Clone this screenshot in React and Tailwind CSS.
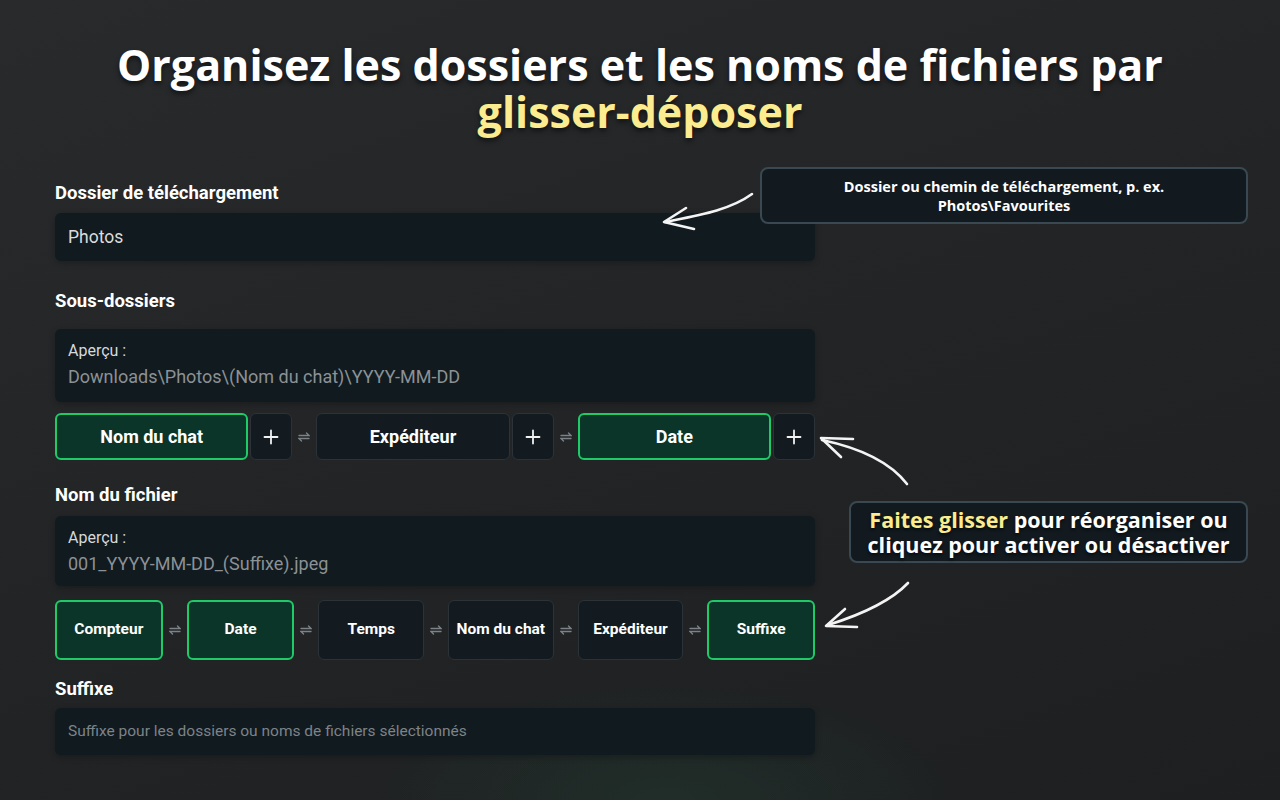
import React from "react";

const ui = { fontFamily: "Roboto, 'Noto Sans', sans-serif" };
const head = { fontFamily: "'Open Sans', 'Noto Sans', sans-serif" };

function Swap() {
  return (
    <div className="flex w-[24px] shrink-0 items-center justify-center">
      <svg width="12" height="14" viewBox="0 0 12 14" fill="none" stroke="#7c8287" strokeWidth="1.3" strokeLinecap="round">
        <path d="M1 5.5H11L8.5 3" />
        <path d="M11 8.5H1L3.5 11" />
      </svg>
    </div>
  );
}

function PlusBtn() {
  return (
    <div className="flex w-[42px] shrink-0 items-center justify-center rounded-md border border-[#2b3339] bg-[#131b20]">
      <svg width="16" height="16" viewBox="0 0 16 16" stroke="#f1f1f1" strokeWidth="1.8" strokeLinecap="round">
        <path d="M8 1.5V14.5M1.5 8H14.5" />
      </svg>
    </div>
  );
}

function Chip({ label, active, small }) {
  return (
    <div
      className={
        "flex flex-1 items-center justify-center whitespace-nowrap rounded-md font-bold text-white " +
        (small ? "text-[15.5px] " : "text-[18px] ") +
        (active
          ? "border-2 border-[#1fcb68] bg-[#0c3529]"
          : "border border-[#2b3339] bg-[#131b20]")
      }
    >
      {label}
    </div>
  );
}

function Label({ children, className = "" }) {
  return (
    <div className={"text-[18.5px] font-bold leading-[24px] text-white " + className}>{children}</div>
  );
}

function Preview({ path, className = "" }) {
  return (
    <div className={"rounded-md bg-[#111a1f] px-[13px] pt-[12px] shadow-[0_2px_6px_rgba(0,0,0,0.25)] " + className}>
      <div className="text-[16px] leading-[20px] text-[#d6d8da]">Aperçu :</div>
      <div className="mt-[4px] text-[18px] leading-[24px] text-[#8b9195]">{path}</div>
    </div>
  );
}

export default function App() {
  return (
    <div
      className="relative h-[800px] w-[1280px] overflow-hidden bg-[radial-gradient(ellipse_300px_120px_at_52%_100%,rgba(34,70,52,0.35),transparent),linear-gradient(160deg,#282a2c_0%,#222426_50%,#1d1f21_100%)]"
      style={ui}
    >
      <div
        className="pt-[41px] text-center text-[43px] font-bold leading-[47px] text-white [text-shadow:0_3px_5px_rgba(0,0,0,0.55)]"
        style={head}
      >
        <div>Organisez les dossiers et les noms de fichiers par</div>
        <div className="text-[#fbec8f]">glisser-déposer</div>
      </div>

      <div className="ml-[55px] mt-[46px] w-[760px]">
        <Label>Dossier de téléchargement</Label>
        <div className="mt-[8px] flex h-[48px] items-center rounded-md bg-[#111a1f] px-[13px] text-[17.5px] text-[#dcdcdc] shadow-[0_2px_6px_rgba(0,0,0,0.25)]">
          Photos
        </div>

        <Label className="mt-[28px]">Sous-dossiers</Label>
        <Preview className="mt-[16px] pb-[13px]" path="Downloads\Photos\(Nom du chat)\YYYY-MM-DD" />

        <div className="mt-[11px] flex h-[47px]">
          <div className="flex flex-1 gap-[2px]">
            <Chip label="Nom du chat" active />
            <PlusBtn />
          </div>
          <Swap />
          <div className="flex flex-1 gap-[2px]">
            <Chip label="Expéditeur" />
            <PlusBtn />
          </div>
          <Swap />
          <div className="flex flex-1 gap-[2px]">
            <Chip label="Date" active />
            <PlusBtn />
          </div>
        </div>

        <Label className="mt-[23px]">Nom du fichier</Label>
        <Preview className="mt-[9px] pb-[10px]" path="001_YYYY-MM-DD_(Suffixe).jpeg" />

        <div className="mt-[14px] flex h-[60px]">
          <Chip small label="Compteur" active />
          <Swap />
          <Chip small label="Date" active />
          <Swap />
          <Chip small label="Temps" />
          <Swap />
          <Chip small label="Nom du chat" />
          <Swap />
          <Chip small label="Expéditeur" />
          <Swap />
          <Chip small label="Suffixe" active />
        </div>

        <Label className="mt-[17px]">Suffixe</Label>
        <div className="mt-[7px] flex h-[47px] items-center rounded-md bg-[#111a1f] px-[13px] text-[15.5px] text-[#7d8388] shadow-[0_2px_6px_rgba(0,0,0,0.25)]">
          Suffixe pour les dossiers ou noms de fichiers sélectionnés
        </div>
      </div>

      {/* Callout 1 */}
      <div
        className="absolute left-[760px] top-[167px] flex h-[57px] w-[488px] flex-col items-center justify-center rounded-lg border-2 border-[#3a4852] bg-[#121a1f] text-center text-[14.5px] font-bold leading-[19px] text-white"
        style={head}
      >
        <div>Dossier ou chemin de téléchargement, p. ex.</div>
        <div>Photos\Favourites</div>
      </div>

      {/* Callout 2 */}
      <div
        className="absolute left-[849px] top-[501px] flex h-[62px] w-[399px] flex-col items-center justify-center whitespace-nowrap rounded-lg border-2 border-[#3a4852] bg-[#121a1f] text-center text-[21.5px] font-bold leading-[25px] text-white [text-shadow:0_2px_3px_rgba(0,0,0,0.6)]"
        style={head}
      >
        <div>
          <span className="text-[#fbec8f]">Faites glisser</span> pour réorganiser ou
        </div>
        <div>cliquez pour activer ou désactiver</div>
      </div>

      {/* Arrows */}
      <svg className="pointer-events-none absolute left-0 top-0" width="1280" height="800" fill="none" stroke="#f4f4f4" strokeWidth="2.6" strokeLinecap="round" strokeLinejoin="round">
        <path d="M752 194 C 730 210, 700 215, 665 222" />
        <path d="M686 208 L 664 222 L 694 229" />
        <path d="M907 484 C 890 462, 860 448, 822 440" />
        <path d="M853 439 L 821 438 L 841 457" />
        <path d="M908 583 C 890 602, 860 615, 828 625" />
        <path d="M845 609 L 826 626 L 857 627" />
      </svg>
    </div>
  );
}
